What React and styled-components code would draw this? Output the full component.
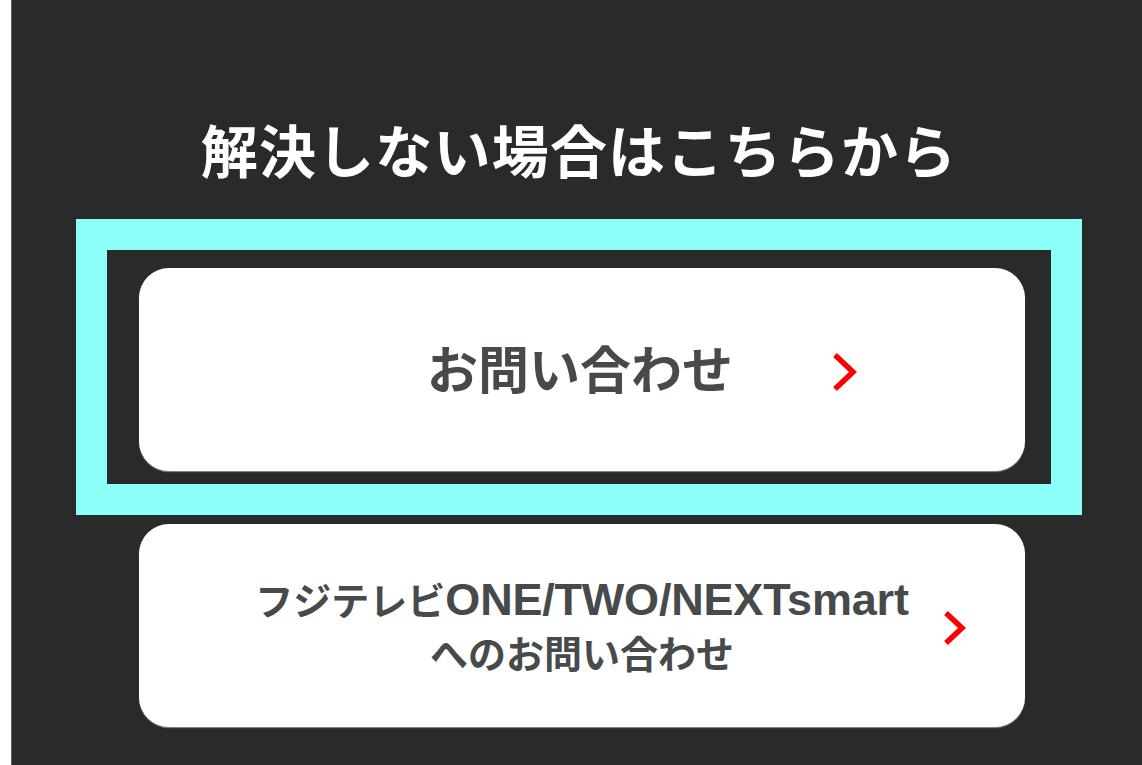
import React from 'react';
import styled, { createGlobalStyle } from 'styled-components';

const GlobalStyle = createGlobalStyle`
  html, body {
    margin: 0;
    padding: 0;
    background: #2a2a2a;
  }
  body {
    font-family: "Noto Sans CJK JP", "Noto Sans", sans-serif;
  }
`

const Page = styled.div`
  display: flex;
  width: 1142px;
  height: 765px;
  overflow: hidden;
`

const Gutter = styled.div`
  width: 11px;
  flex-shrink: 0;
  background: #ffffff;
  border-right: 1px solid #5a5a5a;
`

const Main = styled.main`
  flex: 1;
  background: #2a2a2a;
  padding: 118px 0 0 64px;
`

const Column = styled.div`
  width: 1006px;
  display: flex;
  flex-direction: column;
`

const Title = styled.h2`
  margin: 0 0 41px;
  height: 60px;
  line-height: 60px;
  text-align: center;
  color: #ffffff;
  font-size: 57px;
  font-weight: 700;
  letter-spacing: 1.2px;
`

const Highlight = styled.div`
  border: 31px solid #8cfff9;
  padding: 18px 26px 13px 32px;
`

const LinkButton = styled.a`
  position: relative;
  display: flex;
  align-items: center;
  justify-content: center;
  width: 886px;
  height: 203px;
  box-sizing: border-box;
  margin-left: ${p => p.$offset || 0}px;
  margin-top: ${p => p.$top || 0}px;
  background: #ffffff;
  border-radius: 30px;
  box-shadow: 0 1px 1px #8a8a8a;
  color: #474a4a;
  text-decoration: none;
  text-align: center;
  font-weight: 700;
  font-size: ${p => p.$size}px;
  line-height: ${p => p.$lh}px;
`

const Label = styled.span`
  display: block;
  margin-left: ${p => p.$shift || 0}px;
  margin-bottom: ${p => p.$lift || 0}px;
`

const Latin = styled.span`
  font-family: "Liberation Sans", "Noto Sans CJK JP", sans-serif;
  font-size: 45px;
  line-height: 1;
  letter-spacing: -0.2px;
`

const Chevron = styled.svg`
  position: absolute;
  top: 50%;
  right: ${p => p.$right}px;
  transform: translateY(${p => p.$dy}px);
`

const Arrow = ({ right, dy, w, h }) => (
  <Chevron $right={right} $dy={dy} width={w} height={h} viewBox={`0 0 ${w} ${h}`}>
    <polyline
      points={`3,2 ${w - 4},${h / 2} 3,${h - 2}`}
      fill="none"
      stroke="#ff0000"
      strokeWidth="5.5"
      strokeLinejoin="miter"
    />
  </Chevron>
)

export default function App() {
  return (
    <>
      <GlobalStyle />
      <Page>
        <Gutter />
        <Main>
          <Column>
            <Title>解決しない場合はこちらから</Title>
            <Highlight>
              <LinkButton href="#" $size={51} $lh={60}>
                <Label $shift={-4} $lift={6}>お問い合わせ</Label>
                <Arrow right={168} dy={-17} w={25} h={38} />
              </LinkButton>
            </Highlight>
            <LinkButton href="#" $offset={63} $top={9} $size={38} $lh={53}>
              <Label $lift={2}>
                フジテレビ<Latin>ONE/TWO/NEXTsmart</Latin>
                <br />
                へのお問い合わせ
              </Label>
              <Arrow right={59} dy={-15} w={23} h={34} />
            </LinkButton>
          </Column>
        </Main>
      </Page>
    </>
  );
}
